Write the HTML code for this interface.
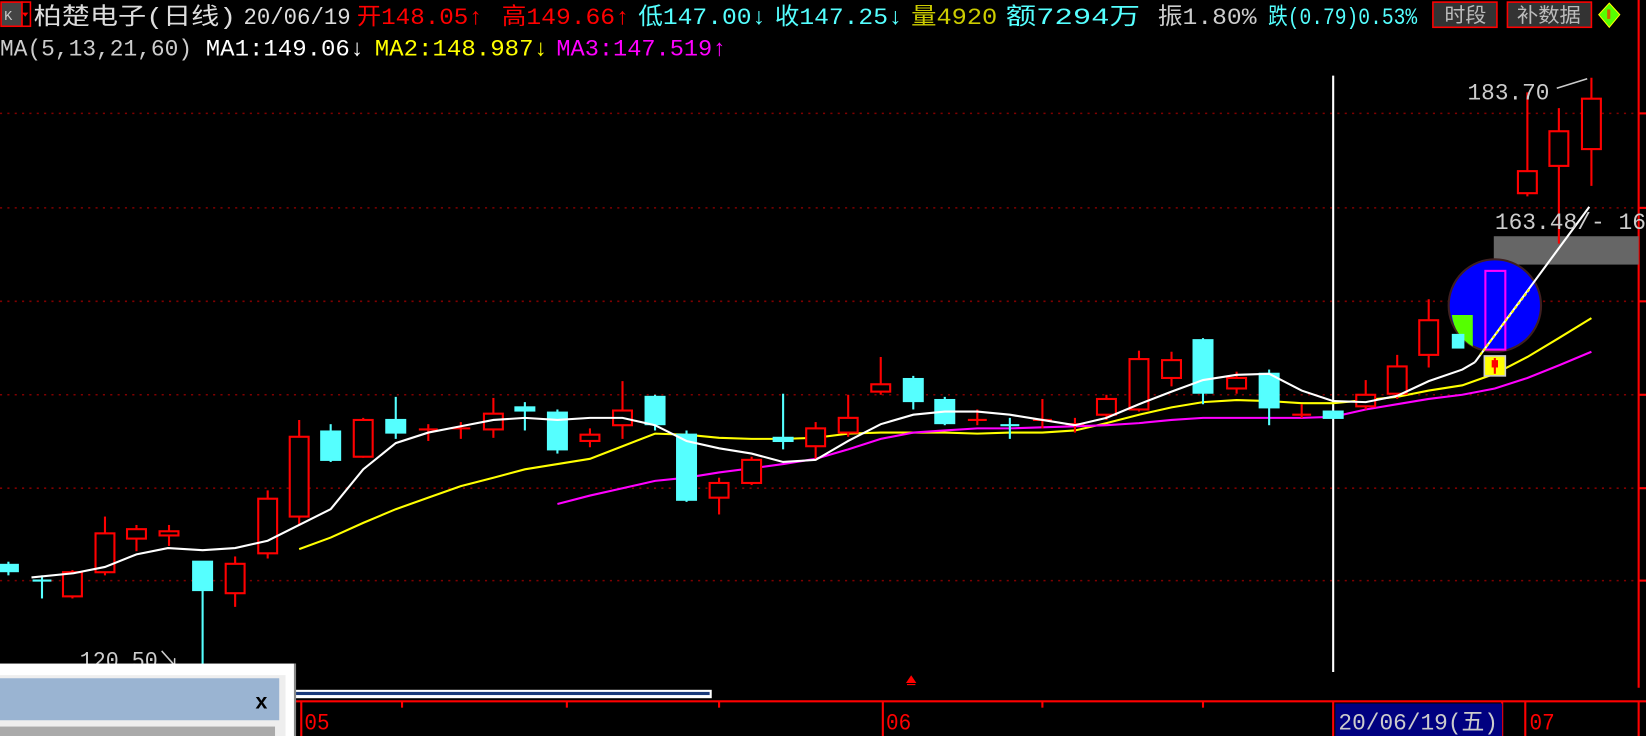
<!DOCTYPE html>
<html><head><meta charset="utf-8"><style>
html,body{margin:0;padding:0;background:#000;width:1646px;height:736px;overflow:hidden}
svg{display:block}
text{font-family:"Liberation Mono","Noto Sans CJK SC",monospace;font-size:22px}
</style></head><body>
<svg width="1646" height="736" viewBox="0 0 1568 701" preserveAspectRatio="none" xmlns="http://www.w3.org/2000/svg">
<rect width="1568" height="701" fill="#000"/>
<g stroke="#800000" stroke-width="1.5" stroke-dasharray="2 5">
<line x1="0" y1="108" x2="1561" y2="108"/><line x1="0" y1="198" x2="1561" y2="198"/>
<line x1="0" y1="287" x2="1561" y2="287"/><line x1="0" y1="376" x2="1561" y2="376"/>
<line x1="0" y1="465" x2="1561" y2="465"/><line x1="0" y1="553" x2="1561" y2="553"/>
</g>
<g stroke="#f00" stroke-width="2">
<line x1="1561" y1="0" x2="1561" y2="655"/>
<line x1="1561" y1="108" x2="1568" y2="108"/><line x1="1561" y1="198" x2="1568" y2="198"/><line x1="1561" y1="287" x2="1568" y2="287"/><line x1="1561" y1="376" x2="1568" y2="376"/><line x1="1561" y1="465" x2="1568" y2="465"/><line x1="1561" y1="553" x2="1568" y2="553"/>
<line x1="282" y1="668" x2="1568" y2="668"/>
<line x1="287" y1="668" x2="287" y2="701"/><line x1="841" y1="668" x2="841" y2="701"/>
<line x1="1270" y1="668" x2="1270" y2="701"/><line x1="1431" y1="668" x2="1431" y2="701"/>
<line x1="1453" y1="668" x2="1453" y2="701"/><line x1="1561" y1="668" x2="1561" y2="701"/>
<line x1="383" y1="668" x2="383" y2="674"/><line x1="540" y1="668" x2="540" y2="674"/><line x1="685" y1="668" x2="685" y2="674"/><line x1="993" y1="668" x2="993" y2="674"/><line x1="1146" y1="668" x2="1146" y2="674"/>
</g>
<line x1="1270" y1="72" x2="1270" y2="640" stroke="#fff" stroke-width="2"/>
<rect x="1423" y="225" width="138" height="27" fill="#666"/>
<polyline fill="none" stroke="#ff0" stroke-width="2" points="285,523 315,512 346,498 377,485 408,474 439,463 470,455 500,447 531,442 562,437 593,425 624,413 654,414 685,417 716,418 746,418 777,417 808,413 839,412 870,412 900,412 931,413 962,412 993,412 1024,410 1054,403 1085,395 1116,388 1146,383 1178,381 1209,382 1240,384 1270,384 1301,381 1331,378 1361,372 1393,367 1424,356 1455,340 1485,322 1516,303"/>
<polyline fill="none" stroke="#f0f" stroke-width="2" points="531,480 562,472 593,465 624,458 654,455 685,450 716,446 746,442 777,437 808,428 839,418 870,412 900,410 931,408 962,408 993,407 1024,406 1054,405 1085,403 1116,400 1146,398 1178,398 1209,398 1240,398 1270,397 1301,390 1331,385 1361,380 1393,376 1424,370 1455,360 1485,348 1516,335"/>
<g stroke="#f00" stroke-width="2" fill="#000">
<line x1="69" y1="543" x2="69" y2="570"/><rect x="60" y="545" width="18" height="23"/>
<line x1="100" y1="492" x2="100" y2="548"/><rect x="91" y="508" width="18" height="37"/>
<line x1="130" y1="500" x2="130" y2="525"/><rect x="121" y="504" width="18" height="9"/>
<line x1="161" y1="500" x2="161" y2="520"/><rect x="152" y="506" width="18" height="4"/>
<line x1="224" y1="530" x2="224" y2="578"/><rect x="215" y="537" width="18" height="28"/>
<line x1="255" y1="467" x2="255" y2="532"/><rect x="246" y="475" width="18" height="52"/>
<line x1="285" y1="400" x2="285" y2="500"/><rect x="276" y="416" width="18" height="76"/>
<line x1="346" y1="398" x2="346" y2="436"/><rect x="337" y="400" width="18" height="35"/>
<line x1="408" y1="404" x2="408" y2="420"/><line x1="399" y1="409" x2="417" y2="409"/>
<line x1="439" y1="402" x2="439" y2="418"/><line x1="430" y1="408" x2="448" y2="408"/>
<line x1="470" y1="379" x2="470" y2="417"/><rect x="461" y="394" width="18" height="15"/>
<line x1="562" y1="408" x2="562" y2="426"/><rect x="553" y="414" width="18" height="6"/>
<line x1="593" y1="363" x2="593" y2="418"/><rect x="584" y="391" width="18" height="14"/>
<line x1="685" y1="455" x2="685" y2="490"/><rect x="676" y="460" width="18" height="14"/>
<line x1="716" y1="435" x2="716" y2="462"/><rect x="707" y="438" width="18" height="22"/>
<line x1="777" y1="402" x2="777" y2="438"/><rect x="768" y="408" width="18" height="17"/>
<line x1="808" y1="376" x2="808" y2="416"/><rect x="799" y="398" width="18" height="14"/>
<line x1="839" y1="340" x2="839" y2="376"/><rect x="830" y="366" width="18" height="7"/>
<line x1="931" y1="390" x2="931" y2="405"/><line x1="922" y1="400" x2="940" y2="400"/>
<line x1="993" y1="380" x2="993" y2="408"/><line x1="984" y1="400" x2="1002" y2="400"/>
<line x1="1024" y1="398" x2="1024" y2="412"/><line x1="1015" y1="404" x2="1033" y2="404"/>
<line x1="1054" y1="376" x2="1054" y2="400"/><rect x="1045" y="380" width="18" height="15"/>
<line x1="1085" y1="334" x2="1085" y2="392"/><rect x="1076" y="342" width="18" height="48"/>
<line x1="1116" y1="335" x2="1116" y2="368"/><rect x="1107" y="343" width="18" height="17"/>
<line x1="1178" y1="354" x2="1178" y2="375"/><rect x="1169" y="360" width="18" height="10"/>
<line x1="1240" y1="385" x2="1240" y2="398"/><line x1="1231" y1="395" x2="1249" y2="395"/>
<line x1="1301" y1="362" x2="1301" y2="390"/><rect x="1292" y="376" width="18" height="11"/>
<line x1="1331" y1="338" x2="1331" y2="380"/><rect x="1322" y="349" width="18" height="26"/>
<line x1="1361" y1="285" x2="1361" y2="350"/><rect x="1352" y="305" width="18" height="33"/>
<line x1="1455" y1="88" x2="1455" y2="187"/><rect x="1446" y="163" width="18" height="21"/>
<line x1="1485" y1="103" x2="1485" y2="232"/><rect x="1476" y="125" width="18" height="33"/>
<line x1="1516" y1="74" x2="1516" y2="177"/><rect x="1507" y="94" width="18" height="48"/>
</g>
<g stroke="#5ff" stroke-width="2" fill="#5ff">
<line x1="8" y1="535" x2="8" y2="548"/><rect x="0" y="538" width="17" height="6"/>
<line x1="40" y1="548" x2="40" y2="570"/><line x1="31" y1="553" x2="49" y2="553"/>
<line x1="193" y1="535" x2="193" y2="640"/><rect x="184" y="535" width="18" height="27"/>
<line x1="315" y1="404" x2="315" y2="440"/><rect x="306" y="411" width="18" height="27"/>
<line x1="377" y1="378" x2="377" y2="418"/><rect x="368" y="400" width="18" height="12"/>
<line x1="500" y1="383" x2="500" y2="410"/><rect x="491" y="388" width="18" height="3"/>
<line x1="531" y1="390" x2="531" y2="432"/><rect x="522" y="393" width="18" height="35"/>
<line x1="624" y1="376" x2="624" y2="410"/><rect x="615" y="378" width="18" height="26"/>
<line x1="654" y1="410" x2="654" y2="478"/><rect x="645" y="414" width="18" height="62"/>
<line x1="746" y1="375" x2="746" y2="428"/><rect x="737" y="417" width="18" height="3"/>
<line x1="870" y1="358" x2="870" y2="390"/><rect x="861" y="361" width="18" height="21"/>
<line x1="900" y1="378" x2="900" y2="405"/><rect x="891" y="381" width="18" height="22"/>
<line x1="962" y1="398" x2="962" y2="418"/><line x1="953" y1="405" x2="971" y2="405"/>
<line x1="1146" y1="322" x2="1146" y2="385"/><rect x="1137" y="324" width="18" height="50"/>
<line x1="1209" y1="352" x2="1209" y2="405"/><rect x="1200" y="356" width="18" height="32"/>
<rect x="1261" y="392" width="18" height="6"/>
</g>
<polyline fill="none" stroke="#fff" stroke-width="2" points="30,550 70,546 100,540 130,528 160,522 193,524 224,522 255,515 285,500 315,485 346,447 377,422 408,412 439,406 470,400 500,398 531,400 562,398 593,398 624,405 654,420 685,427 716,432 746,440 777,438 808,420 839,404 870,395 900,392 931,392 962,395 993,400 1024,405 1054,398 1085,385 1116,373 1146,362 1178,357 1209,356 1240,372 1270,382 1301,383 1331,377 1361,363 1393,352 1405,345"/>
<circle cx="1424" cy="291" r="44" fill="#00f" stroke="#402020" stroke-width="2"/>
<path d="M1383,300 L1403,300 L1403,330 A40,40 0 0 1 1383,300 Z" fill="#5f0"/>
<rect x="1383" y="318" width="12" height="14" fill="#5ff"/>
<rect x="1415" y="258" width="19" height="75" fill="none" stroke="#f0f" stroke-width="2"/>
<line x1="1405" y1="345" x2="1514" y2="197" stroke="#fff" stroke-width="2"/>
<line x1="1410" y1="338" x2="1458" y2="274" stroke="#ff0" stroke-width="2" stroke-dasharray="3 2"/>
<rect x="1414" y="339" width="20" height="19" fill="#ff0" stroke="#ccc" stroke-width="1.5"/>
<line x1="1424" y1="341" x2="1424" y2="356" stroke="#f00" stroke-width="2"/><rect x="1421" y="343" width="6" height="7" fill="#f00"/>
<text x="1398" y="95" fill="#ccc" textLength="78" lengthAdjust="spacingAndGlyphs">183.70</text>
<line x1="1483" y1="84" x2="1512" y2="75" stroke="#ccc" stroke-width="1.5"/>
<text x="1424" y="218" fill="#ccc" textLength="144" lengthAdjust="spacingAndGlyphs">163.48/- 16</text>
<text x="76" y="636" fill="#ccc" textLength="95" lengthAdjust="spacingAndGlyphs">120.50↘</text>
<path d="M864,650 L868,644 L872,650 Z M864,652 H872" fill="#f00" stroke="#f00"/>
<rect x="282" y="657" width="396" height="8" fill="#fff"/>
<rect x="282" y="659" width="394" height="3" fill="#1a3a7a"/>
<rect x="0" y="632" width="282" height="69" fill="#fff"/>
<rect x="280" y="632" width="2" height="69" fill="#888"/>
<rect x="0" y="643" width="272" height="58" fill="#eee"/>
<rect x="0" y="646" width="266" height="40" fill="#9ab4d2"/>
<rect x="0" y="692" width="262" height="9" fill="#aaa"/>
<text x="243" y="675" fill="#000" style="font-size:20px;font-weight:bold">x</text>
<text x="290" y="695" fill="#f00" textLength="24" lengthAdjust="spacingAndGlyphs">05</text>
<text x="844" y="695" fill="#f00" textLength="24" lengthAdjust="spacingAndGlyphs">06</text>
<rect x="1272" y="670" width="159" height="31" fill="#000080"/>
<text x="1275" y="695" fill="#ccc" textLength="152" lengthAdjust="spacingAndGlyphs">20/06/19(五)</text>
<text x="1457" y="695" fill="#f00" textLength="24" lengthAdjust="spacingAndGlyphs">07</text>
<rect x="1" y="2" width="20" height="23" fill="#444" stroke="#f00" stroke-width="1.5"/>
<text x="4" y="19" fill="#ccc" style="font-size:13px">K</text>
<rect x="21" y="2" width="8" height="23" fill="#000" stroke="#f00" stroke-width="1.5"/>
<path d="M21,12 h6 l-3,4z" fill="#f00"/>
<g lengthAdjust="spacingAndGlyphs">
<text x="32" y="23" fill="#ddd" textLength="193" lengthAdjust="spacingAndGlyphs">柏楚电子(日线)</text>
<text x="232" y="23" fill="#ddd" textLength="102" lengthAdjust="spacingAndGlyphs">20/06/19</text>
<text x="340" y="23" fill="#f00" textLength="120" lengthAdjust="spacingAndGlyphs">开148.05↑</text>
<text x="478" y="23" fill="#f00" textLength="122" lengthAdjust="spacingAndGlyphs">高149.66↑</text>
<text x="608" y="23" fill="#5ff" textLength="122" lengthAdjust="spacingAndGlyphs">低147.00↓</text>
<text x="738" y="23" fill="#5ff" textLength="122" lengthAdjust="spacingAndGlyphs">收147.25↓</text>
<text x="868" y="23" fill="#cc0" textLength="82" lengthAdjust="spacingAndGlyphs">量4920</text>
<text x="958" y="23" fill="#5ff" textLength="128" lengthAdjust="spacingAndGlyphs">额7294万</text>
<text x="1103" y="23" fill="#ccc" textLength="94" lengthAdjust="spacingAndGlyphs">振1.80%</text>
<text x="1208" y="23" fill="#5ff" textLength="142" lengthAdjust="spacingAndGlyphs">跌(0.79)0.53%</text>
</g>
<rect x="1365" y="2" width="61" height="24" fill="#333" stroke="#f00" stroke-width="1.5"/>
<text x="1376" y="21" fill="#bbb" style="font-size:19px" textLength="40" lengthAdjust="spacingAndGlyphs">时段</text>
<rect x="1436" y="2" width="80" height="24" fill="#333" stroke="#f00" stroke-width="1.5"/>
<text x="1445" y="21" fill="#bbb" style="font-size:19px" textLength="61" lengthAdjust="spacingAndGlyphs">补数据</text>
<path d="M1533,3 L1543,14 L1533,26 L1523,14 Z" fill="#5f0" stroke="#ff0" stroke-width="1"/>
<rect x="1531" y="9" width="3" height="9" fill="#c60"/>
<text x="0" y="53" fill="#ccc" textLength="183" lengthAdjust="spacingAndGlyphs">MA(5,13,21,60)</text>
<text x="196" y="53" fill="#fff" textLength="151" lengthAdjust="spacingAndGlyphs">MA1:149.06↓</text>
<text x="357" y="53" fill="#ff0" textLength="165" lengthAdjust="spacingAndGlyphs">MA2:148.987↓</text>
<text x="530" y="53" fill="#f0f" textLength="162" lengthAdjust="spacingAndGlyphs">MA3:147.519↑</text>
</svg>
</body></html>
